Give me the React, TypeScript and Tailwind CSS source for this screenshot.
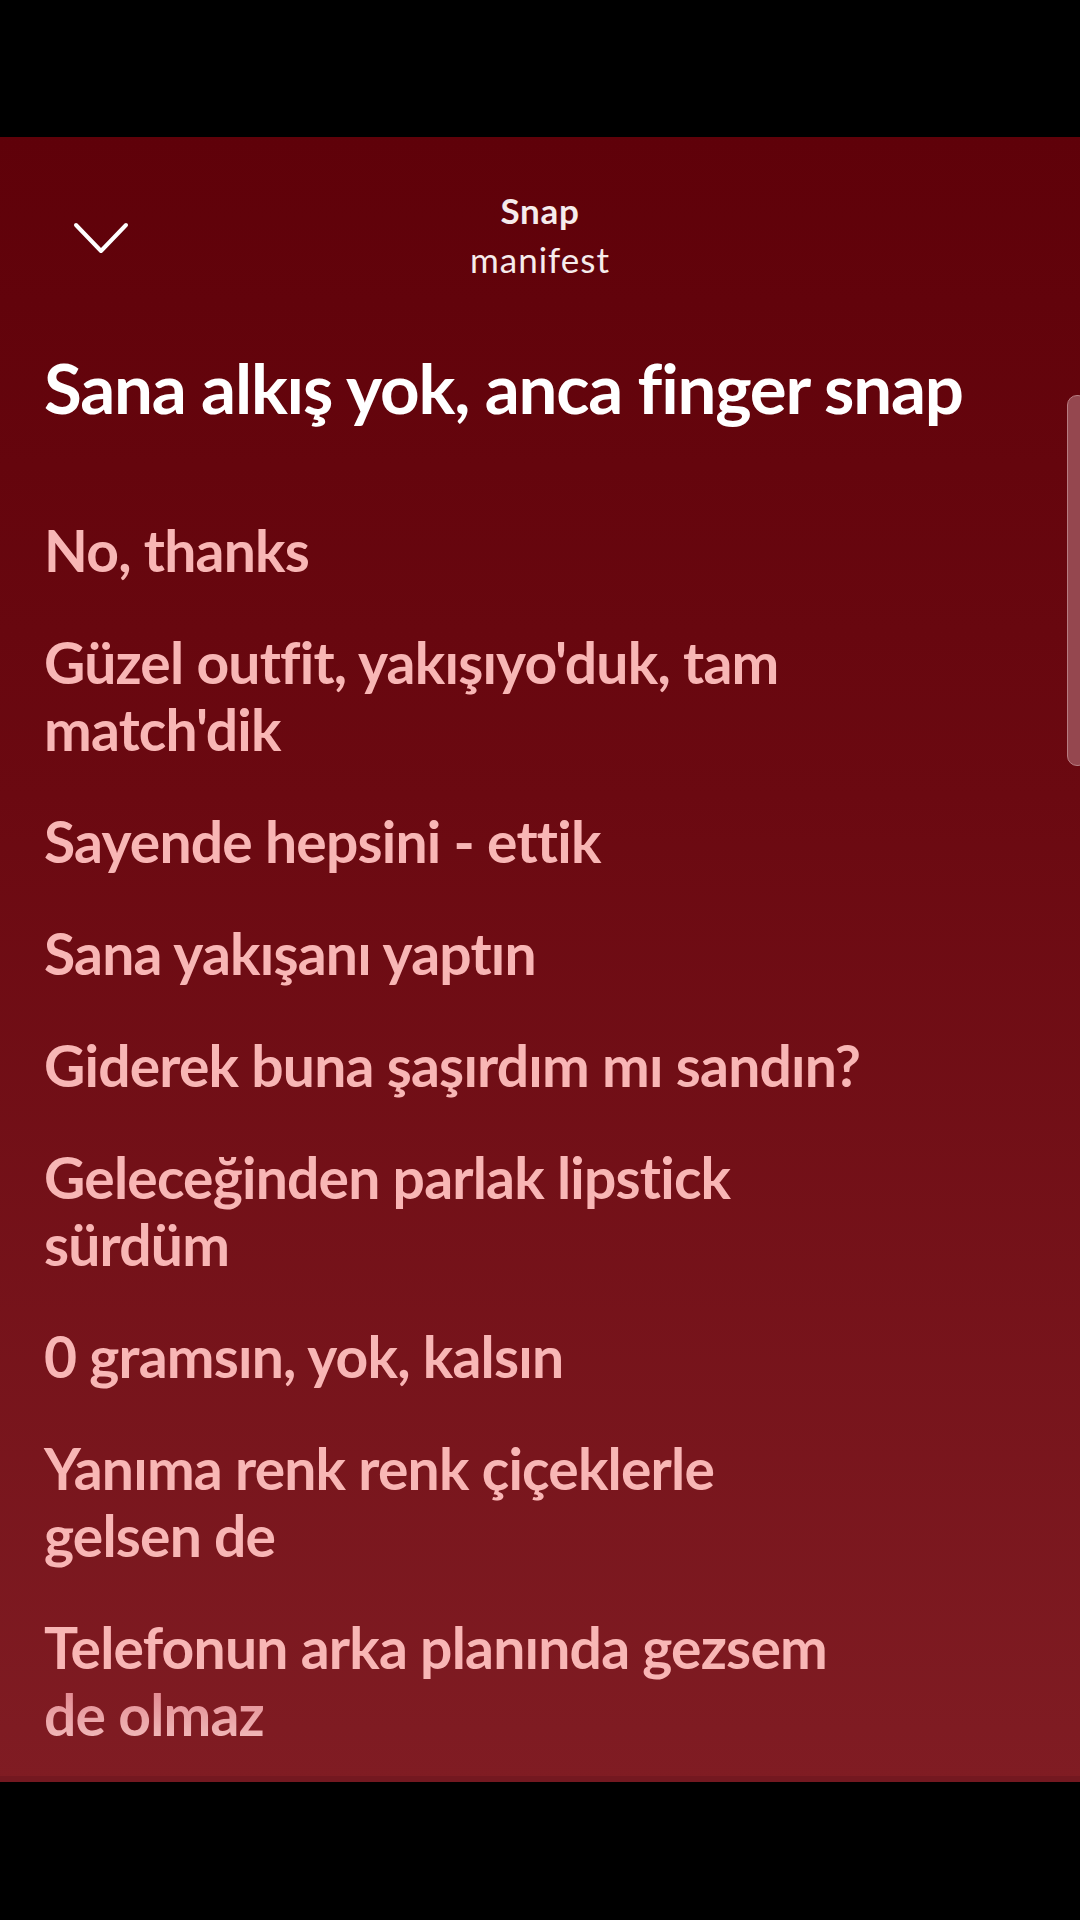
import React from "react";

const lyrics: string[][] = [
  ["No, thanks"],
  ["Güzel outfit, yakışıyo'duk, tam", "match'dik"],
  ["Sayende hepsini - ettik"],
  ["Sana yakışanı yaptın"],
  ["Giderek buna şaşırdım mı sandın?"],
  ["Geleceğinden parlak lipstick", "sürdüm"],
  ["0 gramsın, yok, kalsın"],
  ["Yanıma renk renk çiçeklerle", "gelsen de"],
  ["Telefonun arka planında gezsem", "de olmaz"],
];

function ChevronDown() {
  return (
    <svg width="60" height="36" viewBox="0 0 60 36" fill="none">
      <path
        d="M5 5 L30 31 L55 5"
        stroke="#ffffff"
        strokeWidth="4"
        strokeLinecap="round"
        strokeLinejoin="round"
      />
    </svg>
  );
}

export default function App() {
  return (
    <div className="w-[1080px] h-[1920px] bg-black flex flex-col font-['Lato','Liberation_Sans',sans-serif]">
      <div className="h-[137px] shrink-0 bg-black" />

      <div className="relative h-[1645px] shrink-0 overflow-hidden bg-[linear-gradient(180deg,#5f0109_0%,#6b0911_40%,#801c23_100%)]">
        {/* header */}
        <div className="grid grid-cols-[180px_1fr_180px] pt-[53px]">
          <div className="pl-[71px] pt-[30px]">
            <ChevronDown />
          </div>
          <div className="flex flex-col items-center text-[#f6ecec]">
            <span className="text-[35px] leading-[40px] font-bold tracking-[0.7px]">Snap</span>
            <span className="mt-[9px] text-[35px] leading-[40px] tracking-[1px]">manifest</span>
          </div>
          <div />
        </div>

        {/* current line */}
        <div className="pl-[44px] pt-[68px]">
          <p className="text-[69px] leading-[82px] font-bold text-white tracking-[-1.2px] whitespace-nowrap">
            Sana alkış yok, anca finger snap
          </p>
        </div>

        {/* upcoming lines */}
        <div className="flex flex-col gap-[45px] pl-[44px] pt-[88px]">
          {lyrics.map((block, i) => (
            <div key={i} className="flex flex-col">
              {block.map((line, j) => {
                const last = i === lyrics.length - 1 && j === block.length - 1;
                return (
                  <span
                    key={j}
                    className={
                      last
                        ? "text-[57px] leading-[67px] font-bold tracking-[-0.8px] whitespace-nowrap w-fit bg-[linear-gradient(180deg,#e0828a_0%,#f3c1c0_100%)] bg-clip-text text-transparent"
                        : "text-[57px] leading-[67px] font-bold tracking-[-0.8px] whitespace-nowrap text-[#f8b6b5]"
                    }
                  >
                    {line}
                  </span>
                );
              })}
            </div>
          ))}
        </div>

        {/* scrollbar thumb */}
        <div className="absolute right-[-8px] top-[258px] w-[21px] h-[371px] rounded-[10px] bg-[#9a4f57]/90 border border-[#b87d82]" />

        <div className="absolute bottom-0 left-0 right-0 h-[6px] bg-[#741820]" />
      </div>

      <div className="flex-1 bg-black" />
    </div>
  );
}
